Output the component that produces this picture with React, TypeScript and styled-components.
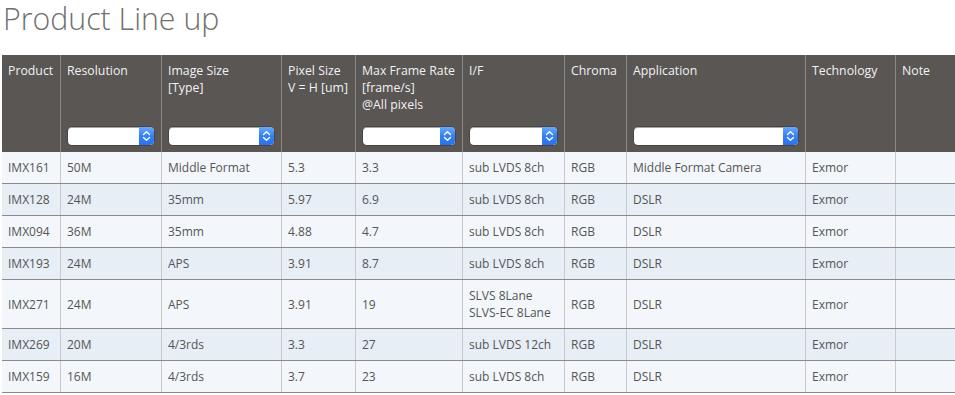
import React from "react";
import styled, { createGlobalStyle } from "styled-components";

const Global = createGlobalStyle`
  html, body { margin: 0; padding: 0; background: #ffffff; overflow: hidden; }
  body { font-family: "Open Sans", "Noto Sans", sans-serif; }
`;

const COLS = "59px 101px 120px 74px 107px 102px 62px 179px 90px 59px";

const Page = styled.div`
  width: 955px;
  padding: 0 0 0 2px;
  box-sizing: border-box;
`;

const Title = styled.h1`
  margin: 0;
  padding: 0 0 0 1px;
  height: 55px;
  font-family: "Open Sans", "Noto Sans", sans-serif;
  font-weight: 300;
  font-size: 30.3px;
  line-height: 38px;
  color: #707070;
`;

const Table = styled.div`
  width: 953px;
`;

const HeaderRow = styled.div`
  display: grid;
  grid-template-columns: ${COLS};
  height: 97px;
  background: #595654;
`;

const HeadCell = styled.div<{ $last?: boolean }>`
  box-sizing: border-box;
  border-right: ${(p) => (p.$last ? "none" : "1px solid #8c8987")};
  padding: 7px 6px 7px 6px;
  display: flex;
  flex-direction: column;
  justify-content: space-between;
  color: #f2f2f2;
  font-size: 12.3px;
  line-height: 17px;
`;

const HeadLabel = styled.div`
  white-space: pre;
`;

const SelectBox = styled.div`
  display: flex;
  height: 18px;
  margin: 0 1px;
  border-radius: 4px;
  background: #ffffff;
  box-shadow: inset 0 1px 0 rgba(0, 0, 0, 0.35), 0 0 0 0.5px rgba(0, 0, 0, 0.4);
  overflow: hidden;
`;

const SelectValue = styled.div`
  flex: 1;
`;

const Stepper = styled.div`
  width: 15px;
  display: flex;
  align-items: center;
  justify-content: center;
  background: linear-gradient(#6aa8fb, #3481f4 50%, #2a72ec);
  border-radius: 0 4px 4px 0;
`;

const Row = styled.div<{ $alt?: boolean }>`
  display: grid;
  grid-template-columns: ${COLS};
  background: ${(p) => (p.$alt ? "#e7eef6" : "#f3f7fb")};
  border-bottom: 1px solid #8a8a8a;
`;

const Cell = styled.div<{ $last?: boolean }>`
  box-sizing: border-box;
  border-right: ${(p) => (p.$last ? "none" : "1px solid #c9c9c9")};
  padding: 7px 6px;
  display: flex;
  flex-direction: column;
  justify-content: center;
  color: #555555;
  font-size: 12px;
  line-height: 17px;
  white-space: nowrap;
`;

const Chevrons = () => (
  <svg width="9" height="12" viewBox="0 0 9 12" fill="none">
    <path d="M1.5 4.5 L4.5 1.8 L7.5 4.5" stroke="#fff" strokeWidth="1.4" strokeLinecap="round" strokeLinejoin="round" />
    <path d="M1.5 7.5 L4.5 10.2 L7.5 7.5" stroke="#fff" strokeWidth="1.4" strokeLinecap="round" strokeLinejoin="round" />
  </svg>
);

const Select = () => (
  <SelectBox>
    <SelectValue />
    <Stepper>
      <Chevrons />
    </Stepper>
  </SelectBox>
);

const headers: { label: string; filter: boolean }[] = [
  { label: "Product", filter: false },
  { label: "Resolution", filter: true },
  { label: "Image Size\n[Type]", filter: true },
  { label: "Pixel Size\nV = H [um]", filter: false },
  { label: "Max Frame Rate\n[frame/s]\n@All pixels", filter: true },
  { label: "I/F", filter: true },
  { label: "Chroma", filter: false },
  { label: "Application", filter: true },
  { label: "Technology", filter: false },
  { label: "Note", filter: false },
];

const rows: string[][] = [
  ["IMX161", "50M", "Middle Format", "5.3", "3.3", "sub LVDS 8ch", "RGB", "Middle Format Camera", "Exmor", ""],
  ["IMX128", "24M", "35mm", "5.97", "6.9", "sub LVDS 8ch", "RGB", "DSLR", "Exmor", ""],
  ["IMX094", "36M", "35mm", "4.88", "4.7", "sub LVDS 8ch", "RGB", "DSLR", "Exmor", ""],
  ["IMX193", "24M", "APS", "3.91", "8.7", "sub LVDS 8ch", "RGB", "DSLR", "Exmor", ""],
  ["IMX271", "24M", "APS", "3.91", "19", "SLVS 8Lane\nSLVS-EC 8Lane", "RGB", "DSLR", "Exmor", ""],
  ["IMX269", "20M", "4/3rds", "3.3", "27", "sub LVDS 12ch", "RGB", "DSLR", "Exmor", ""],
  ["IMX159", "16M", "4/3rds", "3.7", "23", "sub LVDS 8ch", "RGB", "DSLR", "Exmor", ""],
];

export default function App() {
  return (
    <Page>
      <Global />
      <Title>Product Line up</Title>
      <Table>
        <HeaderRow>
          {headers.map((h, i) => (
            <HeadCell key={i} $last={i === headers.length - 1}>
              <HeadLabel>{h.label}</HeadLabel>
              {h.filter && <Select />}
            </HeadCell>
          ))}
        </HeaderRow>
        {rows.map((r, ri) => (
          <Row key={ri} $alt={ri % 2 === 1}>
            {r.map((c, ci) => (
              <Cell key={ci} $last={ci === r.length - 1}>
                {c.split("\n").map((line, li) => (
                  <div key={li}>{line}</div>
                ))}
              </Cell>
            ))}
          </Row>
        ))}
      </Table>
    </Page>
  );
}
